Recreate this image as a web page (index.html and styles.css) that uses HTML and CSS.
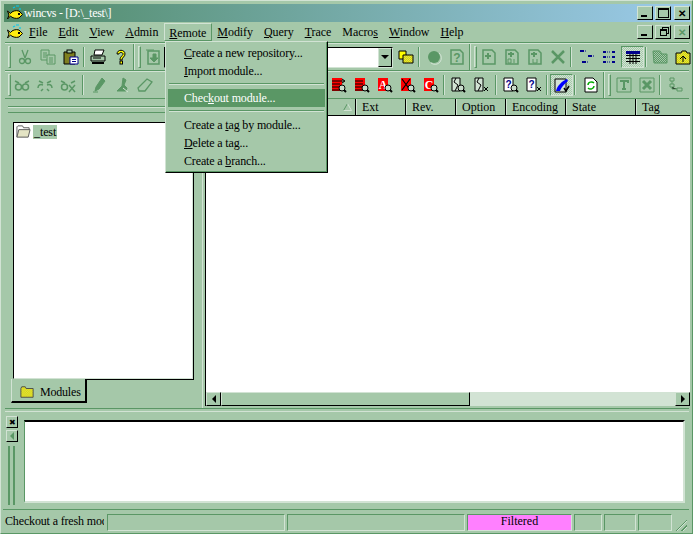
FILE: index.html
```html
<!DOCTYPE html>
<html lang="zh-TW">
<head>
    <meta charset="UTF-8">
    <meta name="viewport" content="width=device-width, initial-scale=1.0">
    <title>wincvs - [D:\_test\]</title>
    <link rel="stylesheet" href="styles.css">
</head>
<body>

<svg class="defs" width="0" height="0">
    <pattern id="dy" width="2" height="2" patternUnits="userSpaceOnUse">
        <rect width="2" height="2" fill="#ffff00"/>
        <rect width="1" height="1" fill="#b8b850"/>
        <rect x="1" y="1" width="1" height="1" fill="#b8b850"/>
    </pattern>
    <pattern id="dg" width="2" height="2" patternUnits="userSpaceOnUse">
        <rect width="2" height="2" fill="#a5c8a9"/>
        <rect width="1" height="1" fill="#5a9765"/>
        <rect x="1" y="1" width="1" height="1" fill="#5a9765"/>
    </pattern>
    <symbol id="fish" viewBox="0 0 16 16">
        <path d="M0.500 6l3 2.500C5 6 9 5 12 6l3.500 3.500L12 13c-3 1-7 0-8.500-2L0.500 14l1.500-4z" fill="#ffee10" stroke="#000"/>
        <path d="M6 3l2-1M9 1h3M13 3v2" stroke="#00c8f0" stroke-width="1.200"/>
        <rect x="11" y="8" width="2" height="2" fill="#000"/>
    </symbol>
    <symbol id="cut" viewBox="0 0 16 16">
        <path d="M5 1l3 8M11 1L8 9" stroke="#5a9765" fill="none" stroke-width="1.300"/>
        <circle cx="5" cy="12" r="2.500" fill="none" stroke="#5a9765" stroke-width="1.300"/>
        <circle cx="11" cy="12" r="2.500" fill="none" stroke="#5a9765" stroke-width="1.300"/>
    </symbol>
    <symbol id="copy" viewBox="0 0 16 16">
        <path d="M1 1h8v10H1z" fill="#a5c8a9" stroke="#5a9765"/>
        <path d="M3 4h4M3 6h4M3 8h3" stroke="#5a9765"/>
        <path d="M7 6h8v9H7z" fill="#a5c8a9" stroke="#5a9765"/>
        <path d="M9 9h4M9 11h4M9 13h4" stroke="#5a9765"/>
    </symbol>
    <symbol id="paste" viewBox="0 0 16 16">
        <path d="M1 3h11v12H1z" fill="#7f7f20" stroke="#000"/>
        <rect x="4" y="1" width="5" height="3" fill="#a5c8a9" stroke="#000"/>
        <path d="M7 8h8v7H7z" fill="#fff" stroke="#00008b"/>
        <path d="M9 10.500h4M9 12.500h4" stroke="#00008b"/>
    </symbol>
    <symbol id="print" viewBox="0 0 16 16">
        <path d="M5 1h9l-2 5H4z" fill="#fff" stroke="#000"/>
        <path d="M1 7h14v5H1z" fill="#a5c8a9" stroke="#000"/>
        <path d="M2 13h12v2H2z" fill="#000"/>
        <path d="M3 9h8" stroke="#000"/>
    </symbol>
    <symbol id="help" viewBox="0 0 16 16">
        <path d="M4 5c0-5 8-5 8 0 0 3-3 3-3 6H7c0-4 3-4 3-6 0-2-4-2-4 0z" fill="#ff0" stroke="#000"/>
        <rect x="7" y="12" width="2.500" height="3" fill="#ff0" stroke="#000"/>
    </symbol>
    <symbol id="doc-in" viewBox="0 0 16 16">
        <path d="M3 2h11v13H3z" fill="none" stroke="#5a9765" stroke-width="1.500"/>
        <path d="M1 1h8M8 5v4H5l4 4 4-4h-2V5z" fill="#5a9765" stroke="#5a9765"/>
    </symbol>
    <symbol id="folders" viewBox="0 0 16 16">
        <path d="M1 2h7v8H1z" fill="#ff0" stroke="#000"/>
        <path d="M5 6h10v8H5z" fill="url(#dy)" stroke="#000"/>
    </symbol>
    <symbol id="dot" viewBox="0 0 16 16">
        <circle cx="8" cy="8" r="6" fill="#5a9765"/>
        <path d="M13 4a6 6 0 0 1-8 10" fill="none" stroke="#d2e3d4"/>
    </symbol>
    <symbol id="doc-page" viewBox="0 0 16 16">
        <path d="M2 1h9l3 3v11H2z" fill="none" stroke="#5a9765" stroke-width="1.500"/>
    </symbol>
    <symbol id="doc-add" viewBox="0 0 16 16">
        <path d="M2 1h9l3 3v11H2z" fill="none" stroke="#5a9765" stroke-width="1.500"/>
        <path d="M7 4v6M4 7h6" stroke="#5a9765" stroke-width="2"/>
    </symbol>
    <symbol id="doc-bin" viewBox="0 0 16 16">
        <path d="M2 1h9l3 3v11H2z" fill="none" stroke="#5a9765" stroke-width="1.500"/>
        <path d="M7 3v5M4 5h6" stroke="#5a9765" stroke-width="2"/>
        <path d="M4 10h3v4H4zM10 10v4" fill="none" stroke="#5a9765"/>
    </symbol>
    <symbol id="doc-u" viewBox="0 0 16 16">
        <path d="M2 1h9l3 3v11H2z" fill="none" stroke="#5a9765" stroke-width="1.500"/>
        <path d="M7 3v5M4 5h6" stroke="#5a9765" stroke-width="2"/>
        <path d="M6 10v4h4v-4" fill="none" stroke="#5a9765"/>
    </symbol>
    <symbol id="cross" viewBox="0 0 16 16">
        <path d="M2 2l12 12M14 2L2 14" stroke="#5a9765" stroke-width="2.500"/>
    </symbol>
    <symbol id="tree" viewBox="0 0 16 16">
        <path d="M1 1h4v2H1zM9 6h4v2H9zM3 12h4v2H3z" fill="#00008b"/>
        <path d="M6 2h2M14 7h2M8 13h2" stroke="#00008b" stroke-dasharray="1 1"/>
    </symbol>
    <symbol id="tree2" viewBox="0 0 16 16">
        <path d="M1 2h3v2H1zM1 7h3v2H1zM1 12h3v2H1zM10 2h3v2h-3zM10 7h3v2h-3zM10 12h3v2h-3z" fill="#00008b"/>
        <path d="M5 3h4M5 8h4M5 13h4" stroke="#00008b" stroke-dasharray="1 1"/>
    </symbol>
    <symbol id="table" viewBox="0 0 16 16">
        <rect x="1" y="2" width="14" height="3" fill="#00008b"/>
        <path d="M1 6.500h14M1 9.500h14M1 12.500h14M5 5v10M8 5v10M11 5v10" stroke="#000"/>
    </symbol>
    <symbol id="folder-off" viewBox="0 0 16 16">
        <path d="M1 2h7l2 3h5v9H2z" fill="url(#dg)" stroke="#5a9765"/>
    </symbol>
    <symbol id="folder-up" viewBox="0 0 16 16">
        <path d="M1 4h5l1-2h4l1 2h3v11H1z" fill="url(#dy)" stroke="#000"/>
        <path d="M8 13V7l-3 3M8 7l3 3" fill="none" stroke="#000"/>
    </symbol>
    <symbol id="eyes1" viewBox="0 0 16 16">
        <circle cx="4.500" cy="10" r="3" fill="none" stroke="#5a9765" stroke-width="1.500"/>
        <circle cx="11.500" cy="10" r="3" fill="none" stroke="#5a9765" stroke-width="1.500"/>
        <path d="M1 4l4 2M15 4l-4 2" stroke="#5a9765" stroke-width="1.500"/>
    </symbol>
    <symbol id="eyes2" viewBox="0 0 16 16">
        <path d="M1 11c0-3 2-4 5-3M15 11c0-3-2-4-5-3" fill="none" stroke="#5a9765" stroke-width="1.500"/>
        <path d="M2 4l4 2M14 4l-4 2M4 14l2-2M12 14l-2-2" stroke="#5a9765" stroke-width="1.500"/>
    </symbol>
    <symbol id="eyes3" viewBox="0 0 16 16">
        <circle cx="4.500" cy="10" r="3" fill="none" stroke="#5a9765" stroke-width="1.500"/>
        <path d="M1 4l4 2M15 4l-4 2M9 8l6 7M15 8l-6 7" stroke="#5a9765" stroke-width="1.500"/>
    </symbol>
    <symbol id="pen" viewBox="0 0 16 16">
        <path d="M11 1l3 3-6 8-4 2 1-4zM2 15h5" fill="#5a9765" stroke="#5a9765"/>
    </symbol>
    <symbol id="stamp" viewBox="0 0 16 16">
        <path d="M9 1l3 2-2 5 3 3-1 3H3l2-2 3-3z" fill="#5a9765" stroke="#5a9765"/>
        <path d="M9 11l5 4" stroke="#d2e3d4"/>
    </symbol>
    <symbol id="erase" viewBox="0 0 16 16">
        <path d="M10 2l5 3-7 9H2l-1-3z" fill="none" stroke="#5a9765" stroke-width="1.300"/>
    </symbol>
    <symbol id="red-page" viewBox="0 0 16 16">
        <rect x="1" y="1" width="10" height="13" fill="#f00"/>
    </symbol>
    <symbol id="red-lines" viewBox="0 0 16 16">
        <path d="M1 4h8M1 7h8M1 10h8M1 13h8" stroke="#000"/>
    </symbol>
    <symbol id="red-cross" viewBox="0 0 16 16">
        <path d="M2 2l8 11M10 2L2 13" stroke="#000" stroke-width="1.200"/>
    </symbol>
    <symbol id="glass" viewBox="0 0 16 16">
        <circle cx="11" cy="11" r="3" fill="#c8dccb" stroke="#000"/>
        <path d="M13 13l2 2" stroke="#000" stroke-width="2"/>
    </symbol>
    <symbol id="arrow-r" viewBox="0 0 16 16">
        <path d="M9 4h4M11 2l3 2-3 2" fill="none" stroke="#000"/>
    </symbol>
    <symbol id="wave" viewBox="0 0 16 16">
        <path d="M2 1h8v13H2z" fill="#d2e3d4" stroke="#000"/>
        <path d="M6 1L4 5l4 3-3 6" fill="none" stroke="#000"/>
    </symbol>
    <symbol id="small-x" viewBox="0 0 16 16">
        <path d="M11 10l4 4M15 10l-4 4" stroke="#000"/>
    </symbol>
    <symbol id="white-page" viewBox="0 0 16 16">
        <path d="M1 1h9v13H1z" fill="#fff" stroke="#000"/>
    </symbol>
    <symbol id="commit" viewBox="0 0 16 16">
        <path d="M1 2h11v13H1z" fill="#d2e3d4" stroke="#000"/>
        <path d="M2 14C3 9 8 4 13 2l1 2C10 7 7 11 6 14z" fill="#0000ff"/>
        <path d="M10 11l2 3 3-5" fill="none" stroke="#000" stroke-width="1.500"/>
    </symbol>
    <symbol id="refresh" viewBox="0 0 16 16">
        <path d="M2 1h8l4 4v10H2z" fill="#fff" stroke="#000"/>
        <path d="M5 8c0-3 4-4 6-2M11 9c0 3-4 4-6 2" fill="none" stroke="#0a0" stroke-width="1.500"/>
    </symbol>
    <symbol id="t-off" viewBox="0 0 16 16">
        <path d="M1 1h14v14H1z" fill="none" stroke="#5a9765"/>
        <path d="M4 4h8v2M8 4v8M6 12h4" fill="none" stroke="#5a9765" stroke-width="2"/>
    </symbol>
    <symbol id="x-off" viewBox="0 0 16 16">
        <path d="M1 1h14v14H1z" fill="none" stroke="#5a9765"/>
        <path d="M4 4l8 8M12 4l-8 8" stroke="#5a9765" stroke-width="3"/>
    </symbol>
    <symbol id="graph" viewBox="0 0 16 16">
        <path d="M2 1h4v3H2zM2 7h4v3H2zM9 11h5v3H9z" fill="none" stroke="#5a9765"/>
        <path d="M4 4v3M4 10v2h5" stroke="#5a9765"/>
    </symbol>
    <symbol id="folder" viewBox="0 0 16 16">
        <path d="M1 4l1-2h4l1 2h8v10H1z" fill="url(#dy)" stroke="#444"/>
    </symbol>
    <symbol id="folder-open" viewBox="0 0 16 16">
        <path d="M1 14V3l1-1h5l1 2h6v2" fill="#fff" stroke="#555"/>
        <path d="M1 14l2-8h12l-2 8z" fill="#e4e4c4" stroke="#555"/>
    </symbol>
</svg>

<div class="window">
    <div class="titlebar">
        <svg class="ic-small"><use href="#fish"/></svg>
        <span class="title-text">wincvs - [D:\_test\]</span>
        <div class="caps">
            <button class="cap"><span class="g-min"></span></button>
            <button class="cap"><span class="g-max"></span></button>
            <button class="cap cap-close">&#10005;</button>
        </div>
    </div>

    <div class="menubar">
        <svg class="ic-small menu-fish"><use href="#fish"/></svg>
        <span class="m m-file"><u>F</u>ile</span>
        <span class="m"><u>E</u>dit</span>
        <span class="m"><u>V</u>iew</span>
        <span class="m"><u>A</u>dmin</span>
        <span class="m m-remote"><u>R</u>emote</span>
        <span class="m"><u>M</u>odify</span>
        <span class="m"><u>Q</u>uery</span>
        <span class="m"><u>T</u>race</span>
        <span class="m">Macro<u>s</u></span>
        <span class="m"><u>W</u>indow</span>
        <span class="m"><u>H</u>elp</span>
        <div class="caps caps-mdi">
            <button class="cap"><span class="g-min"></span></button>
            <button class="cap"><span class="g-restore"></span></button>
            <button class="cap cap-close cap-off">&#10005;</button>
        </div>
    </div>

    <div class="toolbar">
        <span class="grip"></span>
        <span class="tb"><svg><use href="#cut"/></svg></span>
        <span class="tb"><svg><use href="#copy"/></svg></span>
        <span class="tb"><svg><use href="#paste"/></svg></span>
        <span class="sep"></span>
        <span class="tb"><svg><use href="#print"/></svg></span>
        <span class="tb"><svg><use href="#help"/></svg></span>
        <span class="band-end"></span>
        <span class="grip grip-tight"></span>
        <span class="tb"><svg><use href="#doc-in"/></svg></span>
        <div class="combo"><span class="combo-btn"><span class="arrow-down"></span></span></div>
        <span class="tb tb-folders"><svg><use href="#folders"/></svg></span>
        <span class="sep sep-r1"></span>
        <span class="tb"><svg><use href="#dot"/></svg></span>
        <span class="tb">
            <svg viewBox="0 0 16 16"><use href="#doc-page"/><text class="glyph glyph-off" x="8" y="13">?</text></svg>
        </span>
        <span class="band-end"></span>
        <span class="grip grip-tight"></span>
        <span class="tb"><svg><use href="#doc-add"/></svg></span>
        <span class="tb"><svg><use href="#doc-bin"/></svg></span>
        <span class="tb"><svg><use href="#doc-u"/></svg></span>
        <span class="tb"><svg><use href="#cross"/></svg></span>
        <span class="sep sep-2"></span>
        <span class="tb"><svg><use href="#tree"/></svg></span>
        <span class="tb"><svg><use href="#tree2"/></svg></span>
        <span class="tb tb-on"><svg><use href="#table"/></svg></span>
        <span class="sep"></span>
        <span class="tb"><svg><use href="#folder-off"/></svg></span>
        <span class="tb"><svg><use href="#folder-up"/></svg></span>
    </div>

    <div class="toolbar">
        <span class="grip grip-first"></span>
        <span class="tb"><svg><use href="#eyes1"/></svg></span>
        <span class="tb"><svg><use href="#eyes2"/></svg></span>
        <span class="tb"><svg><use href="#eyes3"/></svg></span>
        <span class="sep sep-4"></span>
        <span class="tb"><svg><use href="#pen"/></svg></span>
        <span class="tb"><svg><use href="#stamp"/></svg></span>
        <span class="tb"><svg><use href="#erase"/></svg></span>
        <span class="row2-gap"></span>
        <span class="tb">
            <svg viewBox="0 0 16 16"><use href="#red-page"/><use href="#red-lines"/><use href="#arrow-r"/><use href="#glass"/></svg>
        </span>
        <span class="tb">
            <svg viewBox="0 0 16 16"><use href="#red-page"/><use href="#red-lines"/><use href="#glass"/></svg>
        </span>
        <span class="tb">
            <svg viewBox="0 0 16 16"><use href="#red-page"/><text class="glyph glyph-red" x="6" y="12">A</text><use href="#glass"/></svg>
        </span>
        <span class="tb">
            <svg viewBox="0 0 16 16"><use href="#red-page"/><use href="#red-cross"/><use href="#glass"/></svg>
        </span>
        <span class="tb">
            <svg viewBox="0 0 16 16"><use href="#red-page"/><text class="glyph glyph-red" x="6" y="12">C</text><use href="#glass"/></svg>
        </span>
        <span class="sep"></span>
        <span class="tb"><svg viewBox="0 0 16 16"><use href="#wave"/><use href="#glass"/></svg></span>
        <span class="tb"><svg viewBox="0 0 16 16"><use href="#wave"/><use href="#small-x"/></svg></span>
        <span class="sep sep-wide"></span>
        <span class="tb">
            <svg viewBox="0 0 16 16"><use href="#white-page"/><text class="glyph glyph-q" x="5.500" y="11">?</text><use href="#glass"/></svg>
        </span>
        <span class="tb">
            <svg viewBox="0 0 16 16"><use href="#white-page"/><text class="glyph glyph-q" x="5.500" y="11">?</text><use href="#small-x"/></svg>
        </span>
        <span class="sep sep-r1"></span>
        <span class="tb tb-on"><svg><use href="#commit"/></svg></span>
        <span class="sep sep-r2"></span>
        <span class="tb"><svg><use href="#refresh"/></svg></span>
        <span class="band-end"></span>
        <span class="grip grip-r1"></span>
        <span class="tb"><svg><use href="#t-off"/></svg></span>
        <span class="tb"><svg><use href="#x-off"/></svg></span>
        <span class="sep sep-2"></span>
        <span class="tb"><svg><use href="#graph"/></svg></span>
    </div>

    <div class="panes">
        <div class="left">
            <div class="left-grip"></div>
            <div class="tree-box">
                <div class="tree-row">
                    <svg><use href="#folder-open"/></svg>
                    <span class="tree-label">_test</span>
                </div>
            </div>
            <div class="tab">
                <svg><use href="#folder"/></svg>
                <span>Modules</span>
            </div>
        </div>
        <div class="right">
            <div class="head">
                <span class="col col-name">
                    <svg class="sort-up" viewBox="0 0 9 8"><path d="M4.500 0.500L0.500 7.500" stroke="#5a9765" fill="none"/><path d="M4.500 0.500L8.500 7.500H0.500" stroke="#d2e3d4" fill="none"/></svg>
                </span>
                <span class="col col-short">Ext</span>
                <span class="col col-short">Rev.</span>
                <span class="col col-short">Option</span>
                <span class="col col-enc">Encoding</span>
                <span class="col col-state">State</span>
                <span class="col col-tag">Tag</span>
            </div>
            <div class="files"></div>
            <div class="hscroll">
                <span class="sb-btn"><span class="arrow-left"></span></span>
                <span class="sb-thumb"></span>
                <span class="sb-track"></span>
                <span class="sb-btn"><span class="arrow-right"></span></span>
            </div>
        </div>
    </div>

    <div class="lower">
        <div class="dock">
            <button class="dock-btn">&#10006;</button>
            <button class="dock-btn"><span class="arrow-left arrow-off"></span></button>
            <div class="dock-grip"></div>
        </div>
        <div class="output"></div>
    </div>

    <div class="statusbar">
        <span class="st st-msg">Checkout a fresh module</span>
        <span class="st st-a"></span>
        <span class="st st-a"></span>
        <span class="st st-filter">Filtered</span>
        <span class="st st-b"></span>
        <span class="st st-c"></span>
        <span class="st st-d"></span>
        <span class="size-grip"></span>
    </div>

    <div class="menu">
        <div class="mi"><u>C</u>reate a new repository...</div>
        <div class="mi"><u>I</u>mport module...</div>
        <div class="mi-sep"></div>
        <div class="mi mi-active">Chec<u>k</u>out module...</div>
        <div class="mi-sep"></div>
        <div class="mi">Create a <u>t</u>ag by module...</div>
        <div class="mi"><u>D</u>elete a tag...</div>
        <div class="mi">Create a <u>b</u>ranch...</div>
    </div>
</div>

</body>
</html>
```

FILE: styles.css
```css
html, body {
    margin: 0;
    overflow: hidden;
}
body {
    font-family: "Liberation Serif", serif;
    font-size: 12px;
    color: #000;
    background-color: #a5c8a9;
}
.defs {
    position: absolute;
}
.window {
    position: relative;
    box-sizing: border-box;
    width: 693px;
    height: 534px;
    padding: 4px 3px 3px 4px;
    display: flex;
    flex-direction: column;
    background-color: #a5c8a9;
    border-top: 1px solid #d2e3d4;
    border-left: 1px solid #d2e3d4;
    border-right: 1px solid #5a9765;
    border-bottom: 1px solid #5a9765;
}

/* title bar */
.titlebar {
    height: 18px;
    margin: -1px -2px 0 -1px;
    flex: none;
    display: flex;
    align-items: center;
    background: linear-gradient(to right, #4f8a66, #9ccbeb);
    color: #fff;
}
.ic-small {
    width: 16px;
    height: 16px;
    flex: none;
}
.titlebar .ic-small {
    margin-left: 3px;
}
.title-text {
    margin-left: 1px;
    font-size: 12px;
    letter-spacing: -.3px;
}
.caps {
    margin-left: auto;
    display: flex;
    gap: 2px;
    margin-right: 1px;
}
.cap {
    box-sizing: border-box;
    width: 16px;
    height: 14px;
    padding: 0;
    display: flex;
    align-items: center;
    justify-content: center;
    font-size: 10px;
    color: #000;
    background-color: #a5c8a9;
    border: 1px solid;
    border-color: #d2e3d4 #000 #000 #d2e3d4;
}
.cap-close {
    font-weight: 700;
    margin-left: 1px;
}
.cap-off {
    color: #5a9765;
}
.g-min {
    width: 6px;
    height: 2px;
    margin-top: 6px;
    margin-right: 2px;
    background-color: #000;
}
.g-max {
    width: 9px;
    height: 7px;
    border: 1px solid #000;
    border-top-width: 2px;
}
.g-restore {
    width: 5px;
    height: 4px;
    border: 1px solid #000;
    border-top-width: 2px;
    box-shadow: 2px -2px 0 -1px #a5c8a9, 2px -2px 0 0 #000;
}

/* menu */
.menubar {
    position: relative;
    height: 21px;
    flex: none;
    display: flex;
    align-items: center;
    border-bottom: 1px solid #5a9765;
    box-sizing: border-box;
}
.menu-fish {
    margin-left: 2px;
    margin-right: 1px;
}
.m {
    padding: 0 5.500px;
    line-height: 18px;
    letter-spacing: -.06px;
}
.m-file {
    padding-left: 5px;
}
.m-remote {
    border: 1px solid;
    border-color: #d2e3d4 #5a9765 #5a9765 #d2e3d4;
    height: 18px;
    padding: 0 4.500px;
    box-sizing: border-box;
}
.caps-mdi {
    margin-right: -1px;
}

/* toolbars */
.toolbar {
    height: 28px;
    flex: none;
    display: flex;
    align-items: center;
    box-sizing: border-box;
    border-top: 1px solid #d2e3d4;
    border-bottom: 1px solid #5a9765;
}
.grip {
    width: 3px;
    height: 22px;
    margin: 0 2px 0 3px;
    flex: none;
    background-color: #a5c8a9;
    border: 1px solid;
    border-color: #d2e3d4 #5a9765 #5a9765 #d2e3d4;
    box-sizing: border-box;
}
.grip-tight {
    margin-right: 0;
}
.grip-first {
    margin-right: -1px;
}
.grip-r1 {
    margin-right: 1px;
}
.tb {
    box-sizing: border-box;
    width: 23px;
    height: 22px;
    flex: none;
    display: flex;
    align-items: center;
    justify-content: center;
}
.tb svg {
    width: 16px;
    height: 16px;
}
.glyph {
    font-weight: 700;
    text-anchor: middle;
}
.glyph-off {
    font-family: "Liberation Sans", sans-serif;
    font-size: 12px;
    fill: #5a9765;
}
.glyph-red {
    font-family: "Liberation Serif", serif;
    font-size: 12px;
    fill: #fff;
}
.glyph-q {
    font-family: "Liberation Sans", sans-serif;
    font-size: 10px;
    fill: #00008b;
}
.tb-on {
    border: 1px solid;
    border-color: #5a9765 #d2e3d4 #d2e3d4 #5a9765;
    background-image: repeating-conic-gradient(#d2e3d4 0 25%, #a5c8a9 0 50%);
    background-size: 2px 2px;
}
.sep {
    width: 2px;
    height: 20px;
    margin: 0 1px;
    flex: none;
    box-sizing: border-box;
    border-left: 1px solid #5a9765;
    border-right: 1px solid #d2e3d4;
}
.sep-wide {
    margin: 0 2px 0 3px;
}
.sep-r1 {
    margin-right: 2px;
}
.sep-r2 {
    margin-right: 3px;
}
.sep-2 {
    margin: 0 3px 0 1px;
}
.sep-4 {
    margin: 0 3px 0 3px;
}
.band-end {
    width: 2px;
    height: 26px;
    margin-left: 1px;
    flex: none;
    box-sizing: border-box;
    border-left: 1px solid #5a9765;
    border-right: 1px solid #d2e3d4;
}
.row2-gap {
    width: 171px;
    flex: none;
}

/* combo */
.combo {
    box-sizing: border-box;
    width: 229px;
    height: 21px;
    flex: none;
    display: flex;
    justify-content: flex-end;
    background-color: #fff;
    border: 1px solid;
    border-color: #000 #d2e3d4 #d2e3d4 #000;
}
.combo-btn {
    width: 14px;
    display: flex;
    align-items: center;
    justify-content: center;
    background-color: #a5c8a9;
    border: 1px solid;
    border-color: #d2e3d4 #000 #000 #d2e3d4;
    box-sizing: border-box;
}
.arrow-down {
    width: 0;
    height: 0;
    border-left: 4px solid transparent;
    border-right: 4px solid transparent;
    border-top: 4px solid #000;
}
.tb-folders {
    margin-left: 1px;
}

/* panes */
.panes {
    height: 309px;
    flex: none;
    display: flex;
}
.left {
    width: 198px;
    flex: none;
    box-sizing: border-box;
    border-right: 1px solid #d2e3d4;
}
.left-grip {
    height: 5px;
    margin: 7px 0 9px 3px;
    border-top: 1px solid #5a9765;
    border-bottom: 1px solid #5a9765;
    box-shadow: 0 1px 0 #d2e3d4 inset;
}
.tree-box {
    box-sizing: border-box;
    width: 180px;
    height: 257px;
    margin-left: 8px;
    padding: 1px 0 0 1px;
    background-color: #fff;
    border-style: solid;
    border-width: 1px;
    border-color: #000 #d2e3d4 #d2e3d4 #000;
    box-shadow: 1px 1px 0 #000;
}
.tree-row {
    display: flex;
    align-items: center;
    gap: 1px;
}
.tree-row svg {
    width: 17px;
    height: 15px;
}
.tree-label {
    padding: 0 1px;
    background-color: #a5c8a9;
    line-height: 14px;
    letter-spacing: -.1px;
}
.tab {
    position: relative;
    box-sizing: border-box;
    width: 76px;
    height: 24px;
    margin-left: 6px;
    padding: 4px 0 0 8px;
    display: flex;
    align-items: center;
    gap: 6px;
    letter-spacing: -.2px;
    background-color: #a5c8a9;
    border-left: 1px solid #d2e3d4;
    border-right: 2px solid #000;
    border-bottom: 2px solid #000;
}
.tab svg {
    width: 14px;
    height: 14px;
}
.right {
    width: 485px;
    margin-left: 2px;
    padding-bottom: 2px;
    box-sizing: border-box;
    flex: none;
    display: flex;
    flex-direction: column;
}
.head {
    height: 16px;
    flex: none;
    display: flex;
    border-bottom: 1px solid #000;
    box-sizing: content-box;
}
.col {
    box-sizing: border-box;
    padding-left: 5px;
    line-height: 16px;
    flex: none;
    border-left: 1px solid #d2e3d4;
    border-right: 1px solid #000;
}
.col-name {
    width: 151px;
    position: relative;
}
.col-short { width: 50px; }
.col-enc { width: 60px; }
.col-state { width: 70px; }
.col-tag {
    width: 54px;
    border-right: none;
}
.sort-up {
    position: absolute;
    right: 3px;
    top: 4px;
    width: 9px;
    height: 8px;
}
.files {
    flex: 1;
    background-color: #fff;
    border-left: 1px solid #000;
}
.hscroll {
    height: 14px;
    flex: none;
    display: flex;
    border-left: 1px solid #000;
}
.sb-btn {
    box-sizing: border-box;
    width: 15px;
    flex: none;
    display: flex;
    align-items: center;
    justify-content: center;
    border: 1px solid;
    border-color: #d2e3d4 #000 #000 #d2e3d4;
}
.sb-thumb {
    width: 249px;
    flex: none;
    box-sizing: border-box;
    border: 1px solid;
    border-color: #d2e3d4 #000 #000 #d2e3d4;
}
.sb-track {
    flex: 1;
    background-color: #d2e3d4;
}
.arrow-left {
    width: 0;
    height: 0;
    border-top: 4px solid transparent;
    border-bottom: 4px solid transparent;
    border-right: 4px solid #000;
}
.arrow-right {
    width: 0;
    height: 0;
    border-top: 4px solid transparent;
    border-bottom: 4px solid transparent;
    border-left: 4px solid #000;
}
.arrow-off {
    border-right-color: #5a9765;
}

/* lower dock */
.lower {
    box-sizing: border-box;
    height: 101px;
    flex: none;
    display: flex;
    padding-top: 7px;
    border-top: 1px solid #5a9765;
    box-shadow: inset 0 2px 0 #a5c8a9, inset 0 3px 0 #d2e3d4;
}
.dock {
    width: 19px;
    flex: none;
    display: flex;
    flex-direction: column;
    align-items: flex-start;
    gap: 2px;
}
.dock-btn {
    box-sizing: border-box;
    width: 12px;
    height: 12px;
    margin-left: 1px;
    padding: 0;
    display: flex;
    align-items: center;
    justify-content: center;
    font-size: 8px;
    background-color: #a5c8a9;
    border: 1px solid;
    border-color: #d2e3d4 #000 #000 #d2e3d4;
}
.dock-grip {
    box-sizing: border-box;
    width: 7px;
    height: 59px;
    margin: 2px 0 0 3px;
    border-left: 2px solid #5a9765;
    border-right: 2px solid #5a9765;
}
.output {
    box-sizing: border-box;
    width: 661px;
    height: 83px;
    margin-top: 4px;
    background-color: #fff;
    border: 2px solid;
    border-color: #000 #d2e3d4 #d2e3d4 #5a9765;
    border-left-width: 1px;
}

/* status bar */
.statusbar {
    box-sizing: border-box;
    height: 22px;
    flex: none;
    display: flex;
    align-items: flex-end;
    gap: 2px;
    margin-left: -2px;
    border-top: 1px solid #5a9765;
}
.st {
    box-sizing: border-box;
    height: 17px;
    flex: none;
    line-height: 13px;
    border: 1px solid;
    border-color: #5a9765 #d2e3d4 #d2e3d4 #5a9765;
}
.st-msg {
    width: 102px;
    padding-left: 1px;
    overflow: hidden;
    white-space: nowrap;
    letter-spacing: -.15px;
    border-color: transparent;
}
.st-a { width: 178px; }
.st-filter {
    width: 105px;
    text-align: center;
    background-color: #ff80ff;
}
.st-b { width: 28px; }
.st-c { width: 32px; }
.st-d { width: 34px; }
.size-grip {
    width: 13px;
    height: 13px;
    background: repeating-linear-gradient(135deg, #a5c8a9 0 2px, #5a9765 2px 3px, #d2e3d4 3px 4px);
    clip-path: polygon(100% 0, 100% 100%, 0 100%);
}

/* open menu */
.menu {
    position: absolute;
    left: 164px;
    top: 40px;
    box-sizing: border-box;
    width: 163px;
    height: 132px;
    padding: 2px;
    letter-spacing: -.15px;
    background-color: #a5c8a9;
    border: 1px solid;
    border-color: #d2e3d4 #000 #000 #d2e3d4;
    box-shadow: inset -1px -1px 0 #5a9765;
}
.mi {
    height: 18px;
    line-height: 18px;
    padding-left: 16px;
    white-space: nowrap;
}
.mi-active {
    color: #fff;
    background-color: #5a9765;
}
.mi-sep {
    height: 2px;
    margin: 3px 1px 4px;
    border-top: 1px solid #5a9765;
    border-bottom: 1px solid #d2e3d4;
    box-sizing: border-box;
}
```
